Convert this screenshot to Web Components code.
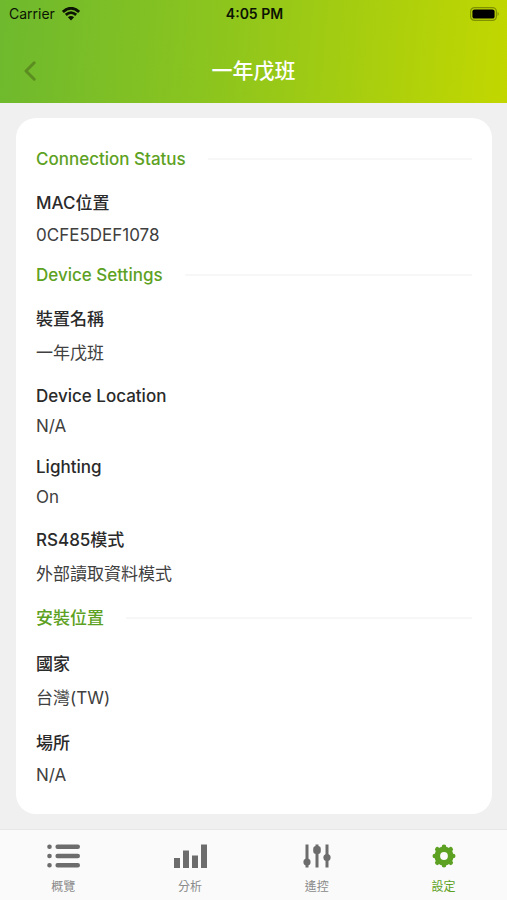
<!DOCTYPE html>
<html lang="zh-Hant">
<head>
<meta charset="utf-8">
<meta name="viewport" content="width=device-width, initial-scale=1">
<title>一年戊班</title>
<style>
  body {
    margin: 0;
    font-family: Inter, "Noto Sans CJK TC", sans-serif;
    color: #2c2c2c;
    background: #f0f0f0;
  }
</style>
</head>
<body>
<device-page></device-page>
<script>
class BaseElement extends HTMLElement {
  connectedCallback() {
    if (this.shadowRoot) return;
    this.attachShadow({ mode: "open" }).innerHTML = this.render();
  }
}

customElements.define("status-bar", class extends BaseElement {
  render() {
    return `
<style>
  :host { display: grid; grid-template-columns: 1fr auto 1fr; align-items: center; height: 28px; padding: 0 7px 0 9px; color: #0c1404; font-size: 14px; line-height: 20px; }
  .carrier { display: flex; align-items: center; gap: 7px; }
  .time { font-weight: 600; }
  .battery { justify-self: end; }
  svg { display: block; }
</style>
<span class="carrier"><span>Carrier</span>
  <svg width="18" height="14" viewBox="0 0 18 14" fill="none" stroke="currentColor" stroke-width="2.8" aria-hidden="true">
    <path d="M.9 4.9Q9-2.4 17.1 4.9M3.8 7.9Q9 3.4 14.2 7.9"/>
    <path d="M5.9 10.2Q9 7.7 12.1 10.2L9 13.4Z" fill="currentColor" stroke="none"/>
  </svg>
</span>
<span class="time">4:05 PM</span>
<svg class="battery" width="30" height="14" viewBox="0 0 30 14" aria-hidden="true">
  <rect x=".6" y=".6" width="25.8" height="12.8" rx="4" fill="none" stroke="#0c1404" stroke-opacity=".35" stroke-width="1.2"/>
  <rect x="2.4" y="2.4" width="22.2" height="9.2" rx="2.2" fill="#000"/>
  <path d="M27.6 4.8Q30 7 27.6 9.2Z" fill="#0c1404" fill-opacity=".35"/>
</svg>`;
  }
});

customElements.define("nav-header", class extends BaseElement {
  render() {
    return `
<style>
  :host { display: block; background: linear-gradient(95deg, #6eb92e, #8ac41f 40%, #c2d700); }
  .bar { display: grid; grid-template-columns: 1fr auto 1fr; align-items: center; padding: 25px 12px 14px; }
  button { display: flex; align-items: center; justify-content: center; width: 36px; height: 36px; padding: 0; border: 0; background: none; color: #5c8d20; }
  h1 { margin: 0; color: #fff; font-size: 21px; line-height: 28px; font-weight: 500; }
</style>
<status-bar></status-bar>
<div class="bar">
  <button type="button" aria-label="返回">
    <svg width="12" height="20" viewBox="0 0 12 20" fill="none" stroke="currentColor" stroke-width="3" stroke-linecap="round" stroke-linejoin="round"><path d="M10.2 1.8L2 10L10.2 18.2"/></svg>
  </button>
  <h1><slot></slot></h1>
</div>`;
  }
});

customElements.define("settings-section", class extends BaseElement {
  render() {
    return `
<style>
  :host { display: flex; flex-direction: column; gap: 21px; }
  header { display: flex; align-items: center; gap: 22px; margin-bottom: 1px; }
  h2 { margin: 0; color: #5da123; font-size: 17px; line-height: 20px; font-weight: 500; }
  :host([wide]) h2 { line-height: 24px; }
  header::after { content: ""; flex: 1; height: 2px; background: #f7f7f7; }
</style>
<header><h2>${this.getAttribute("heading")}</h2></header>
<slot></slot>`;
  }
});

customElements.define("setting-item", class extends BaseElement {
  render() {
    return `
<style>
  :host { display: block; }
  dl { margin: 0; display: grid; gap: 10px; font-size: 17px; }
  dt, dd { margin: 0; line-height: 20px; }
  dt { color: #2a2a2a; font-weight: 500; }
  dd { color: #404040; }
  .han { line-height: 24px; }
</style>
<dl><dt>${this.getAttribute("label")}</dt><dd><slot></slot></dd></dl>`;
  }
  connectedCallback() {
    super.connectedCallback();
    const han = /\p{Script=Han}/u;
    this.shadowRoot.querySelector("dt").classList.toggle("han", han.test(this.getAttribute("label")));
    this.shadowRoot.querySelector("dd").classList.toggle("han", han.test(this.textContent));
  }
});

customElements.define("settings-card", class extends BaseElement {
  render() {
    return `
<style>
  :host { display: flex; flex-direction: column; gap: 20px; margin: 15px 15px 15px 16px; padding: 31px 20px 29px; border-radius: 20px; background: #fff; }
</style>
<slot></slot>`;
  }
});

const icons = {
  list: `<g stroke="currentColor" stroke-width="4.4" stroke-linecap="round"><path d="M11.6 3.8H31.8M11.6 13H31.8M11.6 22.2H31.8"/><path d="M3.4 3.8h.2M3.4 13h.2M3.4 22.2h.2"/></g>`,
  chart: `<path fill="currentColor" d="M1 15h6v10H1zM10 7.4h6V25h-6zM19 12.4h6V25h-6zM28 1.4h6V25h-6z"/>`,
  sliders: `<g stroke="currentColor" stroke-width="3"><path d="M7 1.5V24.5M17 1.5V24.5M27 1.5V24.5"/></g><g fill="currentColor"><circle cx="7" cy="19" r="3.6"/><rect x="13.2" y="3" width="7.6" height="8" rx="3"/><circle cx="27" cy="14.5" r="3.6"/></g>`,
  gear: `<g transform="translate(17 13)"><g stroke="currentColor" stroke-width="4.6" stroke-linecap="round"><path d="M0-9.2V9.2M-9.2 0H9.2M-6.7-6.7L6.7 6.7M6.7-6.7L-6.7 6.7"/></g><circle r="9.6" fill="currentColor"/><circle r="3.9" fill="#fafafa"/></g>`
};

customElements.define("tab-item", class extends BaseElement {
  render() {
    return `
<style>
  :host { display: block; flex: 1; color: #6c6c6c; }
  :host([active]) { color: #5da123; }
  a { display: flex; flex-direction: column; align-items: center; gap: 9px; color: inherit; text-decoration: none; }
  svg { display: block; }
  span { color: #8a8a8a; font-size: 12px; line-height: 18px; }
  :host([active]) span { color: inherit; }
</style>
<a href="#${this.getAttribute("icon")}" ${this.hasAttribute("active") ? 'aria-current="page"' : ""}>
  <svg width="34" height="26" viewBox="0 0 34 26" fill="none" aria-hidden="true">${icons[this.getAttribute("icon")]}</svg>
  <span><slot></slot></span>
</a>`;
  }
});

customElements.define("tab-bar", class extends BaseElement {
  render() {
    return `
<style>
  :host { display: block; background: #fafafa; border-top: 1px solid #e6e6e6; }
  nav { display: flex; padding: 13px 0 5px; }
</style>
<nav><slot></slot></nav>`;
  }
});

customElements.define("device-page", class extends BaseElement {
  render() {
    return `
<style>
  :host { display: flex; flex-direction: column; min-height: 100vh; }
  main { flex: 1; display: flow-root; }
</style>
<nav-header>一年戊班</nav-header>
<main>
  <settings-card>
    <settings-section heading="Connection Status">
      <setting-item label="MAC位置">0CFE5DEF1078</setting-item>
    </settings-section>
    <settings-section heading="Device Settings">
      <setting-item label="裝置名稱">一年戊班</setting-item>
      <setting-item label="Device Location">N/A</setting-item>
      <setting-item label="Lighting">On</setting-item>
      <setting-item label="RS485模式">外部讀取資料模式</setting-item>
    </settings-section>
    <settings-section heading="安裝位置" wide>
      <setting-item label="國家">台灣(TW)</setting-item>
      <setting-item label="場所">N/A</setting-item>
    </settings-section>
  </settings-card>
</main>
<tab-bar>
  <tab-item icon="list">概覽</tab-item>
  <tab-item icon="chart">分析</tab-item>
  <tab-item icon="sliders">遙控</tab-item>
  <tab-item icon="gear" active>設定</tab-item>
</tab-bar>`;
  }
});
</script>
</body>
</html>
